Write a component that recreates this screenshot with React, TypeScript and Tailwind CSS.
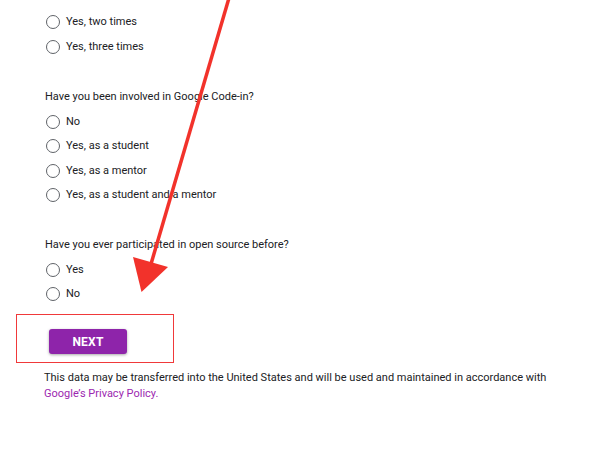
import React from "react";

function Radio({ label }: { label: string }) {
  return (
    <div className="flex h-[24.5px] items-center">
      <span className="ml-[46px] box-border h-[14px] w-[14px] rounded-full border-[1.5px] border-[#5f6368]" />
      <span className="ml-[6px] text-[11px] text-[#202124]">{label}</span>
    </div>
  );
}

function Question({ text }: { text: string }) {
  return (
    <div className="flex h-[24px] items-center pl-[45px] text-[11px] text-[#202124]">{text}</div>
  );
}

export default function App() {
  return (
    <div
      className="relative h-[450px] w-[600px] overflow-hidden bg-white"
      style={{ fontFamily: "Roboto, 'Liberation Sans', sans-serif" }}
    >
      <div className="pt-[10px]">
        <Radio label="Yes, two times" />
        <Radio label="Yes, three times" />
        <div className="mt-[26.5px]">
          <Question text="Have you been involved in Google Code-in?" />
          <Radio label="No" />
          <Radio label="Yes, as a student" />
          <Radio label="Yes, as a mentor" />
          <Radio label="Yes, as a student and a mentor" />
        </div>
        <div className="mt-[26px]">
          <Question text="Have you ever participated in open source before?" />
          <Radio label="Yes" />
          <Radio label="No" />
        </div>
        <div className="ml-[16px] mt-[7.5px] box-border h-[49px] w-[158px] border-[1.5px] border-[#f0393a] pl-[32px] pt-[14px]">
          <button className="flex h-[25px] w-[78px] items-center justify-center rounded-[3px] bg-[#8e24aa] text-[12px] font-bold tracking-[0.2px] text-white shadow-[0_1px_3px_rgba(0,0,0,0.35)]">
            NEXT
          </button>
        </div>
        <div className="mt-[6.5px] pl-[44px] pr-[30px] text-[11px] leading-[16.5px] text-[#202124]">
          This data may be transferred into the United States and will be used and maintained in accordance with
          <br />
          <span className="text-[#9c27b0]">Google’s Privacy Policy.</span>
        </div>
      </div>
      <svg className="pointer-events-none absolute left-0 top-0" width="600" height="450">
        <line x1="229" y1="-2" x2="151" y2="264" stroke="#f2322b" strokeWidth="3.5" />
        <polygon points="133,257 168,267 141.5,292" fill="#f2322b" />
      </svg>
    </div>
  );
}
